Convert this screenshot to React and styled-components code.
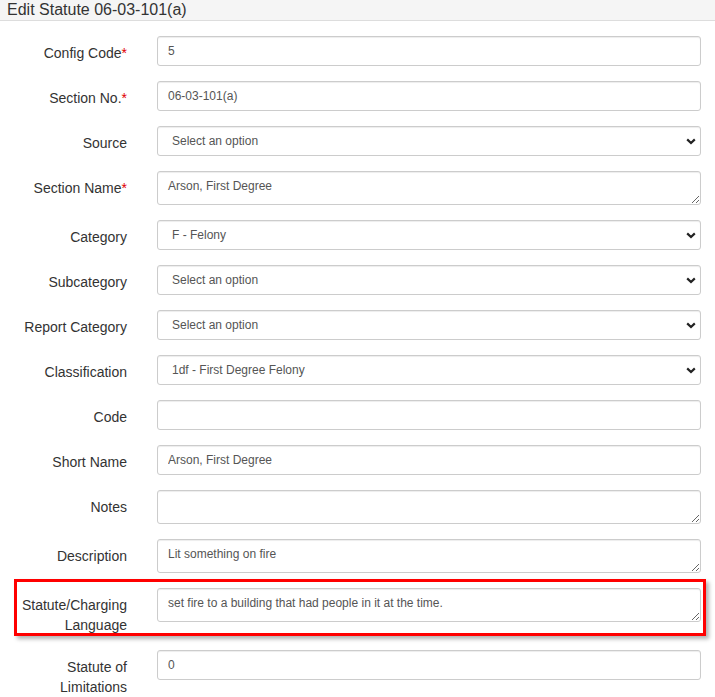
import React from "react";
import styled, { createGlobalStyle } from "styled-components";

const Global = createGlobalStyle`
  html, body { margin: 0; padding: 0; background: #fff; }
  body { font-family: "Liberation Sans", Arial, sans-serif; color: #333; }
  * { box-sizing: border-box; }
`;

const Page = styled.div`
  width: 715px;
`;

const Header = styled.div`
  height: 21px;
  line-height: 20px;
  padding: 0 7px;
  font-size: 16px;
  color: #333;
  background: #f5f5f5;
  border-bottom: 1px solid #dddddd;
  white-space: nowrap;
  overflow: hidden;
`;

const Form = styled.form`
  padding-top: 15px;
`;

const Group = styled.div`
  position: relative;
  display: grid;
  grid-template-columns: 142px 1fr;
  align-items: start;
  margin-bottom: 15px;

  ${(p) =>
    p.$highlight &&
    `
    &::after {
      content: "";
      position: absolute;
      top: -9px;
      left: 14px;
      right: 9px;
      bottom: -1px;
      border: 3px solid #ff0000;
      box-shadow: 3px 3px 4px rgba(0, 0, 0, 0.3);
      pointer-events: none;
    }
  `}
`;

const Label = styled.label`
  padding: 7px 15px 0 15px;
  text-align: right;
  font-size: 14px;
  line-height: 20px;
  color: #333;
`;

const Req = styled.span`
  color: #e00000;
`;

const Cell = styled.div`
  position: relative;
  padding: 0 14px 0 15px;
`;

const controlBase = `
  display: block;
  width: 100%;
  font-family: "Liberation Sans", Arial, sans-serif;
  font-size: 12px;
  line-height: 1.5;
  color: #555;
  background: #fff;
  border: 1px solid #ccc;
  border-radius: 3px;
  box-shadow: inset 0 1px 1px rgba(0, 0, 0, 0.075);
  margin: 0;
  outline: none;
`;

const Input = styled.input`
  ${controlBase}
  height: 30px;
  padding: 5px 10px;
`;

const TextArea = styled.textarea`
  ${controlBase}
  height: 34px;
  padding: 5px 10px;
  resize: vertical;
  overflow: hidden;
`;

const Select = styled.select`
  ${controlBase}
  height: 30px;
  padding: 4px 28px 5px 14px;
  appearance: none;
  -webkit-appearance: none;
`;

const Chevron = styled.svg`
  position: absolute;
  right: 19px;
  top: 12px;
  width: 10px;
  height: 7px;
  pointer-events: none;
`;

const ChevronIcon = () => (
  <Chevron viewBox="0 0 10 7">
    <path d="M1.2 1.4 L5 5 L8.8 1.4" fill="none" stroke="#222" strokeWidth="2.2" />
  </Chevron>
);

const fields = [
  { label: "Config Code", req: true, type: "input", value: "5" },
  { label: "Section No.", req: true, type: "input", value: "06-03-101(a)" },
  { label: "Source", type: "select", value: "Select an option" },
  { label: "Section Name", req: true, type: "textarea", value: "Arson, First Degree" },
  { label: "Category", type: "select", value: "F - Felony" },
  { label: "Subcategory", type: "select", value: "Select an option" },
  { label: "Report Category", type: "select", value: "Select an option" },
  { label: "Classification", type: "select", value: "1df - First Degree Felony" },
  { label: "Code", type: "input", value: "" },
  { label: "Short Name", type: "input", value: "Arson, First Degree" },
  { label: "Notes", type: "textarea", value: "" },
  { label: "Description", type: "textarea", value: "Lit something on fire" },
  {
    label: "Statute/Charging Language",
    type: "textarea",
    value: "set fire to a building that had people in it at the time.",
    highlight: true,
  },
  { label: "Statute of Limitations", type: "input", value: "0" },
];

function Control({ f }) {
  if (f.type === "select") {
    return (
      <>
        <Select defaultValue={f.value}>
          <option>{f.value}</option>
        </Select>
        <ChevronIcon />
      </>
    );
  }
  if (f.type === "textarea") {
    return <TextArea rows={1} defaultValue={f.value} />;
  }
  return <Input type="text" defaultValue={f.value} />;
}

export default function App() {
  return (
    <Page>
      <Global />
      <Header>Edit Statute 06-03-101(a)</Header>
      <Form onSubmit={(e) => e.preventDefault()}>
        {fields.map((f) => (
          <Group key={f.label} $highlight={f.highlight}>
            <Label>
              {f.label}
              {f.req && <Req>*</Req>}
            </Label>
            <Cell>
              <Control f={f} />
            </Cell>
          </Group>
        ))}
      </Form>
    </Page>
  );
}
